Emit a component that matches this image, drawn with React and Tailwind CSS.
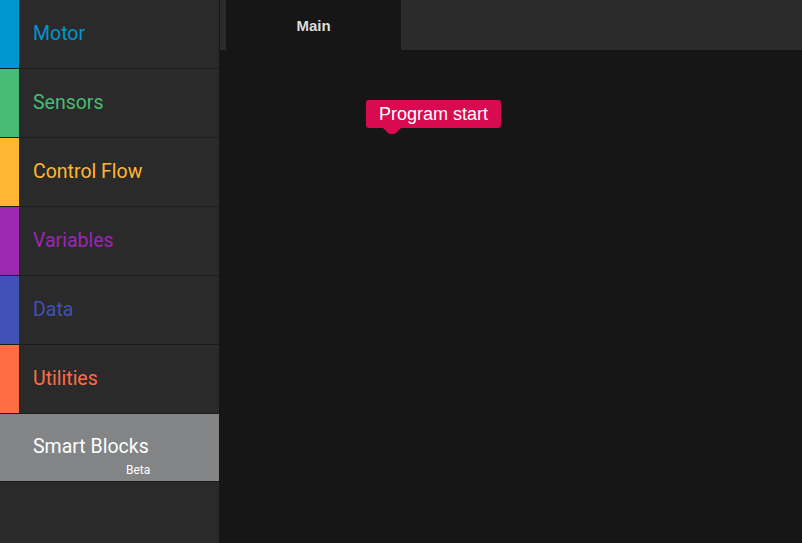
const categories = [
  { name: "Motor", color: "bg-[#0096d0]", text: "text-[#0096d0]" },
  { name: "Sensors", color: "bg-[#48bc74]", text: "text-[#48bc74]" },
  { name: "Control Flow", color: "bg-[#ffb733]", text: "text-[#ffb733]" },
  { name: "Variables", color: "bg-[#9c27b0]", text: "text-[#9c27b0]" },
  { name: "Data", color: "bg-[#3f51b5]", text: "text-[#3f51b5]" },
  { name: "Utilities", color: "bg-[#ff6d44]", text: "text-[#ff6d44]" },
];

export default function App() {
  return (
    <div className="w-[802px] h-[543px] flex bg-[#161616] overflow-hidden font-['Roboto',sans-serif]">
      {/* category sidebar */}
      <div className="w-[219px] h-full bg-[#2a2a2a] flex flex-col">
        {categories.map((c) => (
          <div key={c.name} className="h-[69px] flex border-b border-[#1c1c1c]">
            <div className={`w-[19px] ${c.color}`} />
            <p className={`pl-[14px] self-center pb-[1px] text-[19.5px] ${c.text}`}>{c.name}</p>
          </div>
        ))}
        <div className="h-[68px] bg-[#838485] border-b border-[#1c1c1c] flex flex-col pl-[33px] pt-[21px]">
          <p className="text-[19.5px] leading-[24px] text-white">Smart Blocks</p>
          <p className="text-[12px] leading-[14px] mt-[4px] text-white pl-[93px]">Beta</p>
        </div>
      </div>

      {/* workspace */}
      <div className="flex-1 flex flex-col">
        <div className="h-[50px] ml-px pl-[6px] bg-[#2b2b2b] flex">
          <div className="w-[175px] bg-[#161616] flex items-center justify-center pt-[2px]">
            <span className="text-[15px] font-bold text-[#dddddd] font-['Liberation_Sans',Arial,sans-serif]">Main</span>
          </div>
        </div>
        <div className="flex-1 pl-[147px] pt-[50px]">
          <div className="relative inline-block">
            <div className="h-[28px] px-[13px] pt-[1px] rounded-[3px] bg-[#d90b50] flex items-center text-white text-[18px] font-['Liberation_Sans',Arial,sans-serif]">
              Program start
            </div>
            <svg className="absolute left-[17px] top-[28px]" width="18" height="6" viewBox="0 0 18 6">
              <path d="M0 0 H18 L13 5 Q12 6 10 6 H8 Q6 6 5 5 Z" fill="#d90b50" />
            </svg>
          </div>
        </div>
      </div>
    </div>
  );
}
